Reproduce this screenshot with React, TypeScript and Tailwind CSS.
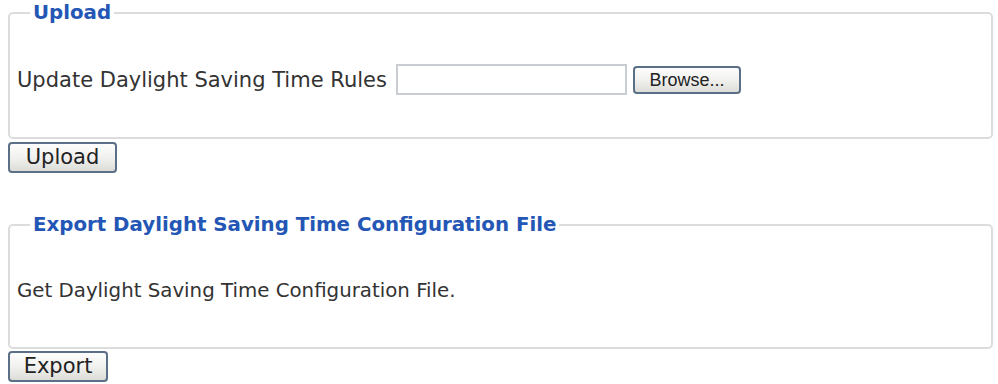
export default function App() {
  const btn =
    "h-[31px] rounded-[4px] border-2 border-[#5b6f86] bg-gradient-to-b from-[#fdfdfd] via-[#f1f1ef] to-[#dcdcd8] text-[#222] leading-none";
  return (
    <div className="w-[998px] h-[384px] bg-white font-['DejaVu_Sans',sans-serif] text-[#333]">
      <div className="pl-2 pr-[5px] pt-[1px]">
        <fieldset className="h-[138px] rounded-[5px] border-2 border-[#dcdcdc] pl-[7px] pr-2">
          <legend className="ml-[13px] px-[3px] text-[19.8px] font-bold leading-[24px] text-[#2456b5]">
            Upload
          </legend>
          <div className="mt-[39px] flex items-center">
            <span className="text-[21px] leading-[30px]">Update Daylight Saving Time Rules</span>
            <input
              type="text"
              className="ml-[9px] h-[31px] w-[231px] border-2 border-[#c9ccd0] bg-white"
            />
            <button
              className={
                "ml-[6px] h-[28px] w-[108px] rounded-[4px] border-2 border-[#5b6f86] bg-gradient-to-b from-[#fdfdfd] via-[#f1f1ef] to-[#dcdcd8] font-['Liberation_Sans',sans-serif] text-[18px] leading-none text-[#222]"
              }
            >
              Browse...
            </button>
          </div>
        </fieldset>
        <button className={btn + " mt-[3px] w-[109px] text-[21px]"}>Upload</button>
        <fieldset className="mt-[40px] h-[136px] rounded-[5px] border-2 border-[#dcdcdc] pl-[7px] pr-2">
          <legend className="ml-[13px] px-[3px] text-[19.8px] font-bold leading-[24px] text-[#2456b5]">
            Export Daylight Saving Time Configuration File
          </legend>
          <div className="mt-[39px] text-[19.8px] leading-[30px]">Get Daylight Saving Time Configuration File.</div>
        </fieldset>
        <button className={btn + " mt-[2px] w-[100px] text-[21px]"}>Export</button>
      </div>
    </div>
  );
}
